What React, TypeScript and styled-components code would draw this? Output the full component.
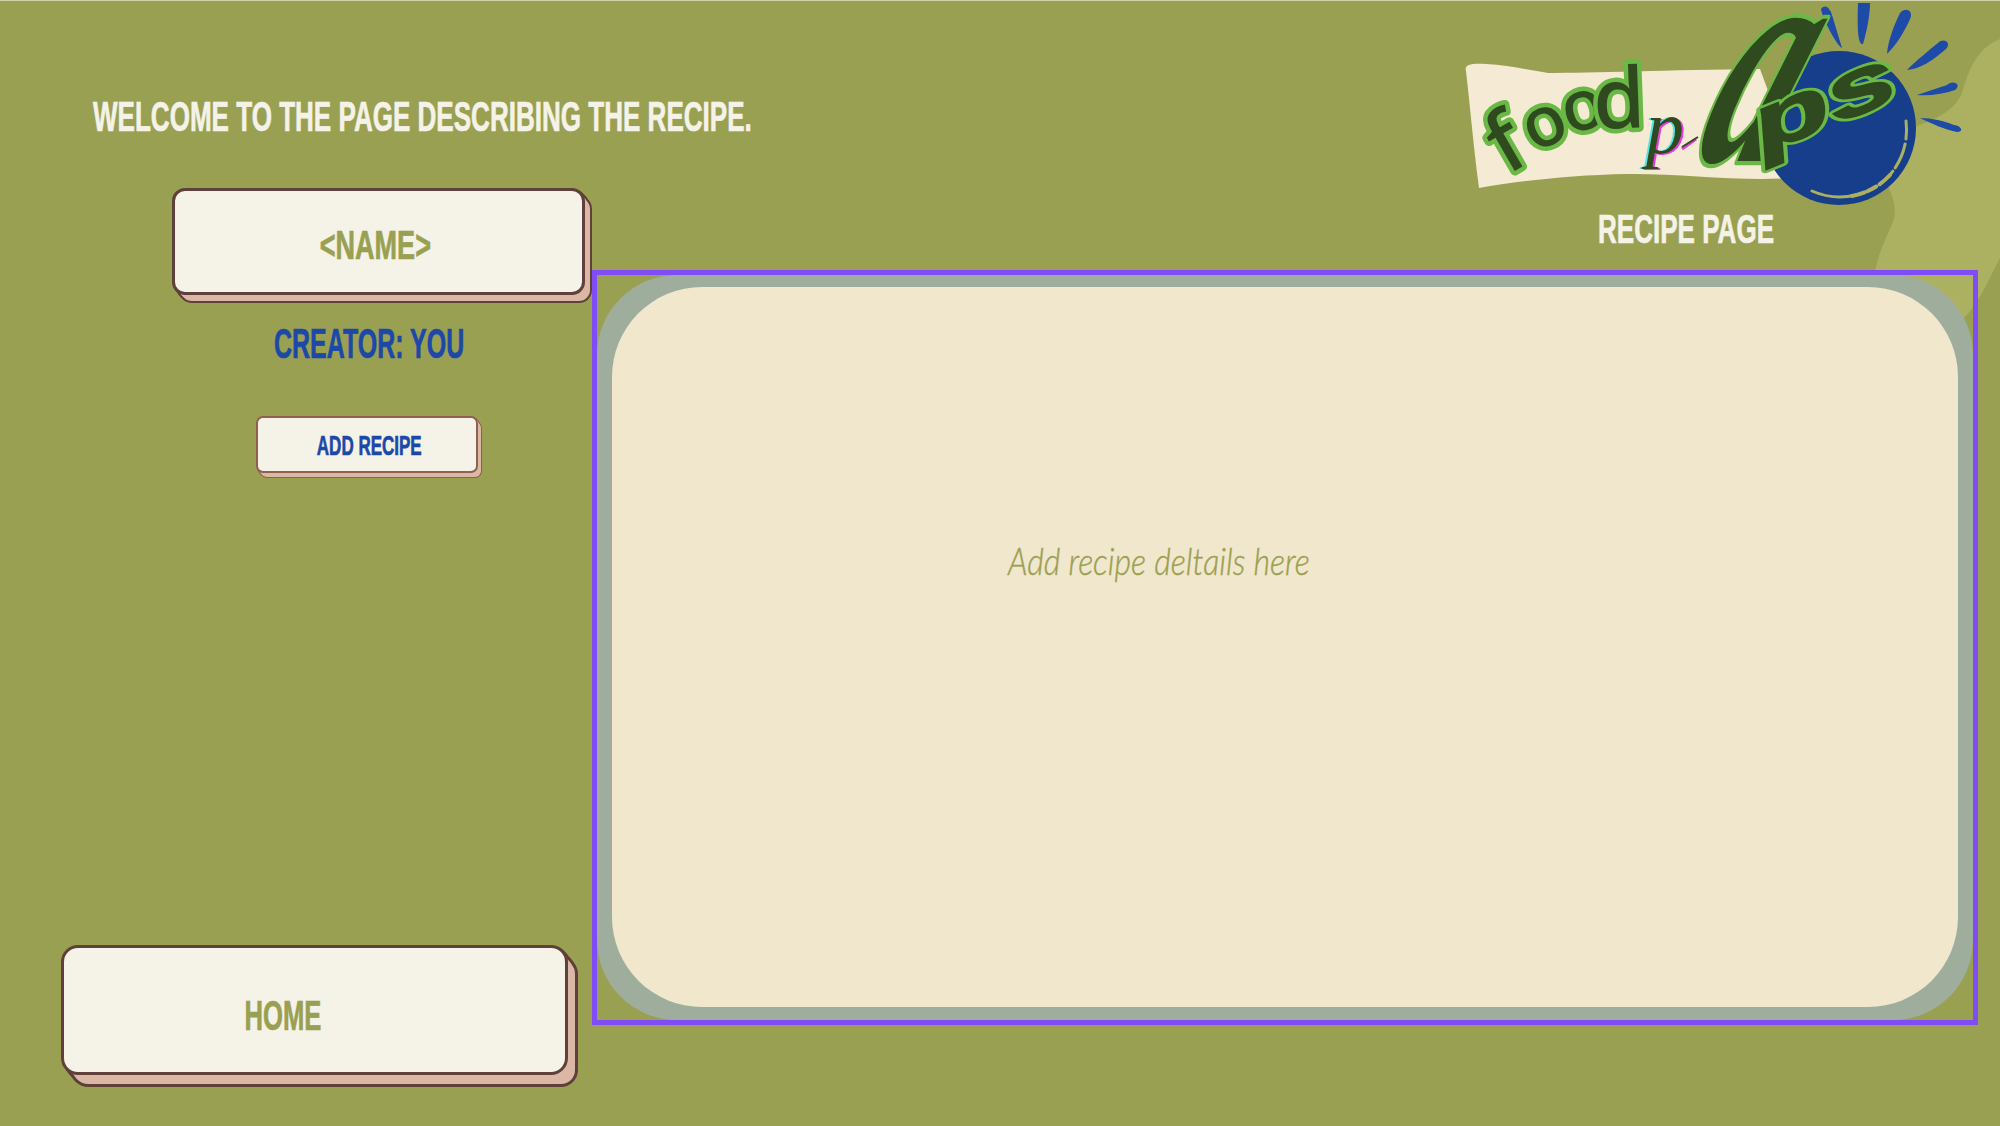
import * as React from 'react';
import styled, { createGlobalStyle, css } from 'styled-components';

const COLORS = {
  olive: '#9aa052',
  oliveLight: '#acb162',
  cream: '#f5f3e8',
  blue: '#1c48a8',
  edge: '#5f403a',
  pink: '#dbb7a5',
};

const GlobalStyle = createGlobalStyle`
  html, body {
    margin: 0;
    padding: 0;
    background: ${COLORS.olive};
  }
`;

// stacked shadows give the extruded edge with its cut corners
function extrude(dx: number, dy: number, border: number, edge: string) {
  const steps = Math.max(dx, dy);
  const pinks: string[] = [];
  const edges: string[] = [];
  for (let i = 1; i <= steps; i++) {
    const x = Math.round((dx * i) / steps);
    const y = Math.round((dy * i) / steps);
    pinks.push(`${x}px ${y}px 0 -${border}px ${COLORS.pink}`);
    edges.push(`${x}px ${y}px 0 0 ${edge}`);
  }
  return [...pinks, ...edges].join(', ');
}

const Page = styled.div`
  position: relative;
  width: 2000px;
  height: 1126px;
  overflow: hidden;
  background: ${COLORS.olive};
  border-top: 1px solid #cfd2ad;
  box-sizing: border-box;
  display: grid;
  grid-template-columns: 592px 1fr;
  font-family: 'Liberation Sans', sans-serif;
  font-weight: 700;
`;

const Backdrop = styled.svg`
  position: absolute;
  top: 0;
  right: 0;
  width: 200px;
  height: 340px;
`;

const Sidebar = styled.aside`
  position: relative;
  display: flex;
  flex-direction: column;
  align-items: flex-start;
  padding-top: 91px;
`;

// the display face is a tall condensed one, so the text is squeezed sideways
const Squeezed = styled.span<{ $squeeze: number; $origin?: string }>`
  display: inline-block;
  white-space: nowrap;
  transform: scaleX(${(p) => p.$squeeze});
  transform-origin: ${(p) => p.$origin || 'center'} center;
  -webkit-text-stroke: 0.7px currentColor;
`;

const Welcome = styled.h1`
  margin: 0 0 0 93px;
  white-space: nowrap;
  font-size: 42px;
  line-height: 50px;
  font-weight: 700;
  color: ${COLORS.cream};
`;

const Card = styled.div<{ $size: 'name' | 'add' | 'home' }>`
  box-sizing: border-box;
  display: flex;
  align-items: center;
  justify-content: center;
  background: ${COLORS.cream};
  ${(p) =>
    p.$size === 'name' &&
    css`
      width: 413px;
      height: 107px;
      margin: 46px 0 0 172px;
      padding: 8px 6px 0 0;
      border: 3px solid ${COLORS.edge};
      border-radius: 13px;
      box-shadow: ${extrude(7, 8, 2, COLORS.edge)};
      font-size: 41px;
      color: ${COLORS.olive};
    `}
  ${(p) =>
    p.$size === 'add' &&
    css`
      width: 222px;
      height: 57px;
      margin: 47px 0 0 256px;
      padding: 4px 0 0 4px;
      border: 2px solid #8f5f50;
      border-radius: 7px;
      box-shadow: ${extrude(4, 5, 1, '#8f5f50')};
      font-size: 27px;
      color: ${COLORS.blue};
    `}
  ${(p) =>
    p.$size === 'home' &&
    css`
      width: 507px;
      height: 130px;
      margin: auto 0 51px 61px;
      padding: 12px 64px 0 0;
      border: 3px solid ${COLORS.edge};
      border-radius: 17px;
      box-shadow: ${extrude(10, 12, 3, COLORS.edge)};
      font-size: 42px;
      color: ${COLORS.olive};
    `}
`;

const Creator = styled.div`
  margin: 24px 0 0 274px;
  font-size: 42px;
  line-height: 50px;
  color: ${COLORS.blue};
  white-space: nowrap;
`;

const Content = styled.main`
  position: relative;
  display: flex;
  flex-direction: column;
  padding-right: 22px;
`;

const Header = styled.header`
  height: 269px;
  display: flex;
  flex-direction: column;
  align-items: flex-start;
`;

const LogoMark = styled.svg`
  display: block;
  width: 540px;
  height: 206px;
  margin-left: 868px;
  font-weight: 400;
`;

const PageTitle = styled.div`
  margin: 0 0 0 1006px;
  font-size: 41px;
  line-height: 44px;
  color: ${COLORS.cream};
  white-space: nowrap;
`;

const Frame = styled.section`
  box-sizing: border-box;
  width: 1386px;
  height: 755px;
  border: 5px solid #7f4cf5;
`;

const Ring = styled.div`
  box-sizing: border-box;
  height: 100%;
  padding: 12px 15px 13px;
  background: #9fae9c;
  border-radius: 80px;
`;

const Sheet = styled.div`
  box-sizing: border-box;
  height: 100%;
  padding: 251px 0 0 396px;
  background: #f1e7cc;
  border-radius: 90px;
`;

const Placeholder = styled.p`
  margin: 0;
  font-family: 'Lato', 'Open Sans', sans-serif;
  font-weight: 300;
  font-style: italic;
  font-size: 38px;
  line-height: 44px;
  color: ${COLORS.olive};
  white-space: nowrap;
  -webkit-text-stroke: 0.4px ${COLORS.olive};
`;

const PlaceholderText = styled.span`
  display: inline-block;
  transform: scaleX(0.845);
  transform-origin: left center;
`;

const INK = '#2f4a1f';
const GLOW = '#6ab845';

const FOOD = [
  { ch: 'f', x: 60, y: 167, size: 84, angle: -30 },
  { ch: 'o', x: 93, y: 143, size: 70, angle: -24 },
  { ch: 'o', x: 128, y: 128, size: 70, angle: -14 },
  { ch: 'd', x: 160, y: 127, size: 84, angle: -2 },
];

function Logo() {
  // svg sits at page x 1460, so coordinates below are page x - 1460
  return (
    <LogoMark viewBox="0 0 540 206">
      <path
        d="M6 70 C4 64 10 62 26 63 C50 64 72 70 88 72 C130 72 210 69 300 68 L340 176 C290 182 220 172 167 173 C110 174 60 180 19 187 C14 150 10 105 6 70 Z"
        fill="#f5ead3"
      />
      <circle cx="379" cy="127" r="77" fill="#173e8a" />
      <g fill="#1e4aa8">
        <path d="M361 8 C366 2 370 8 372 14 L382 47 C376 44 362 16 361 8 Z" />
        <path d="M398 2 L410 2 C410 16 406 32 403 43 C398 44 397 30 398 2 Z" />
        <path d="M440 12 C446 5 454 10 450 18 C444 32 436 44 427 53 C428 40 434 24 440 12 Z" />
        <path d="M478 42 C484 36 492 42 486 48 C472 60 460 68 447 69 C456 60 468 50 478 42 Z" />
        <path d="M487 84 C494 78 502 84 495 89 C484 93 470 95 457 94 Z" />
        <path d="M494 124 C502 125 504 131 497 131 C486 129 470 122 460 117 C472 117 484 120 494 124 Z" />
      </g>
      <g fill="none" stroke={COLORS.oliveLight} strokeLinecap="round">
        <path d="M446 120 A69 69 0 0 1 428 176" strokeWidth="3" strokeDasharray="18 5 26 4" />
        <path d="M430 174 A69 69 0 0 1 392 195" strokeWidth="4" strokeDasharray="14 4 10 3" />
        <path d="M396 194 A69 69 0 0 1 352 190" strokeWidth="3" />
      </g>
      <g fontFamily="'Noto Sans', sans-serif" fontWeight="500">
        {FOOD.map((l, i) => (
          <g key={i} transform={`translate(${l.x} ${l.y}) rotate(${l.angle})`} fontSize={l.size}>
            <text textAnchor="middle" fill={GLOW} stroke={GLOW} strokeWidth="9" strokeLinejoin="round">{l.ch}</text>
            <text textAnchor="middle" fill={INK}>{l.ch}</text>
          </g>
        ))}
      </g>
      <g fontFamily="'Liberation Serif', serif" fontStyle="italic" fontSize="76">
        <text x="188" y="153" fill="#e63ee0">p</text>
        <text x="184" y="152" fill="#57e3e6">p</text>
        <text x="186" y="152" fill={INK}>p</text>
      </g>
      <path d="M222 148 L236 138" stroke="#e63ee0" strokeWidth="3" />
      <path d="M222 146 L238 136" stroke={INK} strokeWidth="2" />
      <g transform="translate(272 160) skewX(-22) scale(0.58 1.05)" fontFamily="'Liberation Serif', serif" fontStyle="italic" fontWeight="700" fontSize="290">
        <text textAnchor="middle" fill={GLOW} stroke={GLOW} strokeWidth="8" strokeLinejoin="round">a</text>
        <text textAnchor="middle" fill={INK}>a</text>
      </g>
      <g transform="translate(373 124) rotate(-22) scale(1.4 0.85)" fontFamily="'Liberation Sans', sans-serif" fontStyle="italic" fontWeight="700" fontSize="92">
        <text textAnchor="middle" fill={GLOW} stroke={GLOW} strokeWidth="8" strokeLinejoin="round">ps</text>
        <text textAnchor="middle" fill={INK} stroke={INK} strokeWidth="2">ps</text>
      </g>
    </LogoMark>
  );
}

export default function App() {
  return (
    <Page>
      <GlobalStyle />
      <Backdrop viewBox="1800 0 200 340">
        <path
          d="M2000 38 C1975 48 1968 72 1962 92 C1955 110 1935 118 1915 126 L1880 170 C1892 190 1897 205 1894 218 C1888 235 1878 250 1875 272 L1960 320 C1975 310 1988 280 2000 257 Z"
          fill={COLORS.oliveLight}
        />
      </Backdrop>
      <Sidebar>
        <Welcome>
          <Squeezed $squeeze={0.62} $origin="left">WELCOME TO THE PAGE DESCRIBING THE RECIPE.</Squeezed>
        </Welcome>
        <Card $size="name">
          <Squeezed $squeeze={0.66}>&lt;NAME&gt;</Squeezed>
        </Card>
        <Creator>
          <Squeezed $squeeze={0.595} $origin="left">CREATOR: YOU</Squeezed>
        </Creator>
        <Card $size="add">
          <Squeezed $squeeze={0.63}>ADD RECIPE</Squeezed>
        </Card>
        <Card $size="home">
          <Squeezed $squeeze={0.61}>HOME</Squeezed>
        </Card>
      </Sidebar>
      <Content>
        <Header>
          <Logo />
          <PageTitle>
            <Squeezed $squeeze={0.635} $origin="left">RECIPE PAGE</Squeezed>
          </PageTitle>
        </Header>
        <Frame>
          <Ring>
            <Sheet>
              <Placeholder>
                <PlaceholderText>Add recipe deltails here</PlaceholderText>
              </Placeholder>
            </Sheet>
          </Ring>
        </Frame>
      </Content>
    </Page>
  );
}
